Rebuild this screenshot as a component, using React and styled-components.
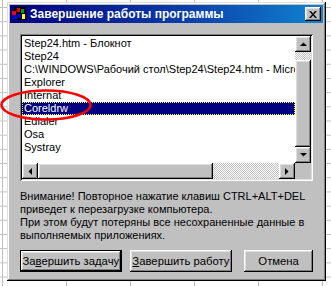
import styled, { createGlobalStyle, css } from "styled-components";

const GlobalStyle = createGlobalStyle`
  html, body {
    margin: 0;
    padding: 0;
  }
  body {
    width: 331px;
    height: 286px;
    overflow: hidden;
    font-family: "Liberation Sans", Arial, sans-serif;
    background-color: #fff;
    background-image:
      linear-gradient(#c0c0c0 1px, transparent 1px),
      linear-gradient(90deg, #c0c0c0 1px, transparent 1px);
    background-size: 64px 14.2px;
    background-position: 2px 7px;
  }
`;

const raised = css`
  background: #c0c0c0;
  box-shadow: inset -1px -1px #000, inset 1px 1px #fff,
    inset -2px -2px #808080, inset 2px 2px #dfdfdf;
`;

const dither = css`
  background-color: #c0c0c0;
  background-image: repeating-conic-gradient(#fff 0 25%, #c0c0c0 0 50%);
  background-size: 2px 2px;
`;

const Page = styled.div`
  position: relative;
  width: 331px;
  height: 286px;
  padding: 2px 0 0 7px;
  box-sizing: border-box;
`;

const Window = styled.div`
  width: 319px;
  height: 279px;
  box-sizing: border-box;
  padding: 3px;
  background: #c0c0c0;
  box-shadow: inset -1px -1px #000, inset 1px 1px #dfdfdf,
    inset -2px -2px #808080, inset 2px 2px #fff;
  display: flex;
  flex-direction: column;
  overflow: hidden;
`;

const TitleBar = styled.div`
  height: 18px;
  flex: none;
  display: flex;
  align-items: center;
  gap: 3px;
  padding: 0 2px 0 1px;
  background: linear-gradient(90deg, #000080 0%, #0a3da8 55%, #1084d0 100%);
`;

const Title = styled.span`
  color: #fff;
  font-weight: bold;
  font-size: 12px;
  white-space: nowrap;
  flex: 1;
`;

const CloseButton = styled.button`
  ${raised};
  width: 16px;
  height: 14px;
  padding: 0;
  border: none;
  display: flex;
  align-items: center;
  justify-content: center;
`;

const Body = styled.div`
  padding: 11px 10px 0 10px;
  display: flex;
  flex-direction: column;
`;

const ListBox = styled.div`
  width: 293px;
  height: 147px;
  box-sizing: border-box;
  padding: 2px;
  background: #fff;
  box-shadow: inset 1px 1px #808080, inset -1px -1px #fff,
    inset 2px 2px #000, inset -2px -2px #dfdfdf;
  display: grid;
  grid-template-columns: 273px 16px;
  grid-template-rows: 127px 16px;
`;

const Items = styled.ul`
  list-style: none;
  margin: 0;
  padding: 1px 0 0 0;
  overflow: hidden;
`;

const Item = styled.li`
  height: 13px;
  line-height: 13px;
  font-size: 11px;
  padding-left: 2px;
  white-space: nowrap;
  overflow: hidden;
  color: ${(p) => (p.$selected ? "#fff" : "#000")};
  background: ${(p) => (p.$selected ? "#000080" : "transparent")};
  outline: ${(p) => (p.$selected ? "1px dotted #ffff00" : "none")};
  outline-offset: -1px;
`;

const VScroll = styled.div`
  display: grid;
  grid-template-rows: 16px 8px 1fr 16px;
`;

const HScroll = styled.div`
  display: grid;
  grid-template-columns: 16px 175px 1fr 16px;
`;

const ScrollButton = styled.div`
  ${raised};
  display: flex;
  align-items: center;
  justify-content: center;
`;

const Thumb = styled.div`
  ${raised};
`;

const Track = styled.div`
  ${dither};
`;

const Corner = styled.div`
  background: #c0c0c0;
`;

const Warning = styled.p`
  margin: 9px 0 0 0;
  font-size: 11px;
  line-height: 13px;
  white-space: nowrap;
  color: #000;
`;

const Buttons = styled.div`
  display: flex;
  margin-top: 8px;
  gap: 8px;
`;

const Button = styled.button`
  ${raised};
  width: ${(p) => p.$w}px;
  height: 22px;
  border: none;
  padding: 0;
  white-space: nowrap;
  font-family: "Liberation Sans", Arial, sans-serif;
  font-size: 11.3px;
  color: #000;
  margin-right: ${(p) => p.$gap || 0}px;
  ${(p) =>
    p.$default &&
    css`
      box-shadow: inset 0 0 0 1px #000, inset -2px -2px #000,
        inset 2px 2px #fff, inset -3px -3px #808080, inset 3px 3px #dfdfdf;
    `}
`;

const Mark = styled.svg`
  position: absolute;
  left: 0;
  top: 89px;
  pointer-events: none;
`;

function Arrow({ dir }) {
  const pts = {
    up: "0,4 7,4 3.5,0.5",
    down: "0,0 7,0 3.5,3.5",
    left: "4,0 4,7 0.5,3.5",
    right: "0,0 0,7 3.5,3.5",
  }[dir];
  const horiz = dir === "left" || dir === "right";
  return (
    <svg width={horiz ? 4 : 7} height={horiz ? 7 : 4}>
      <polygon points={pts} fill="#000" />
    </svg>
  );
}

function AppIcon() {
  return (
    <svg width="16" height="16" viewBox="0 0 16 16">
      <rect x="3" y="1" width="12" height="13" fill="#000" />
      <rect x="1" y="5" width="4" height="4" fill="#ff0000" />
      <rect x="6" y="2" width="3" height="4" fill="#ff0000" />
      <rect x="10" y="3" width="3" height="4" fill="#00a000" />
      <rect x="2" y="9" width="4" height="4" fill="#0000ff" />
      <rect x="7" y="8" width="3" height="4" fill="#0000ff" />
      <rect x="11" y="8" width="3" height="5" fill="#ffff00" />
    </svg>
  );
}

const tasks = [
  "Step24.htm - Блокнот",
  "Step24",
  "C:\\WINDOWS\\Рабочий стол\\Step24\\Step24.htm - Microsoft Internet Explorer",
  "Explorer",
  "Internat",
  "Coreldrw",
  "Edialer",
  "Osa",
  "Systray",
];

export default function App() {
  return (
    <>
      <GlobalStyle />
      <Page>
        <Window>
          <TitleBar>
            <AppIcon />
            <Title>Завершение работы программы</Title>
            <CloseButton type="button">
              <svg width="8" height="7" viewBox="0 0 8 7">
                <path d="M0 0h2l2 2.5L6 0h2L5 3.5 8 7H6L4 4.5 2 7H0l3-3.5z" fill="#000" />
              </svg>
            </CloseButton>
          </TitleBar>
          <Body>
            <ListBox>
              <Items>
                {tasks.map((t) => (
                  <Item key={t} $selected={t === "Coreldrw"}>
                    {t}
                  </Item>
                ))}
              </Items>
              <VScroll>
                <ScrollButton>
                  <Arrow dir="up" />
                </ScrollButton>
                <Track />
                <Thumb />
                <ScrollButton>
                  <Arrow dir="down" />
                </ScrollButton>
              </VScroll>
              <HScroll>
                <ScrollButton>
                  <Arrow dir="left" />
                </ScrollButton>
                <Thumb />
                <Track />
                <ScrollButton>
                  <Arrow dir="right" />
                </ScrollButton>
              </HScroll>
              <Corner />
            </ListBox>
            <Warning>
              Внимание! Повторное нажатие клавиш CTRL+ALT+DEL
              <br />
              приведет к перезагрузке компьютера.
              <br />
              При этом будут потеряны все несохраненные данные в
              <br />
              выполняемых приложениях.
            </Warning>
            <Buttons>
              <Button type="button" $w={102} $default>
                За<u>в</u>ершить задачу
              </Button>
              <Button type="button" $w={103} $gap={4}>
                <u>З</u>авершить работу
              </Button>
              <Button type="button" $w={69}>
                Отмена
              </Button>
            </Buttons>
          </Body>
        </Window>
        <Mark width="94" height="34" viewBox="0 0 94 34">
          <ellipse cx="46" cy="16" rx="44.5" ry="14.5" fill="none" stroke="#ff0000" strokeWidth="2.5" />
        </Mark>
      </Page>
    </>
  );
}
